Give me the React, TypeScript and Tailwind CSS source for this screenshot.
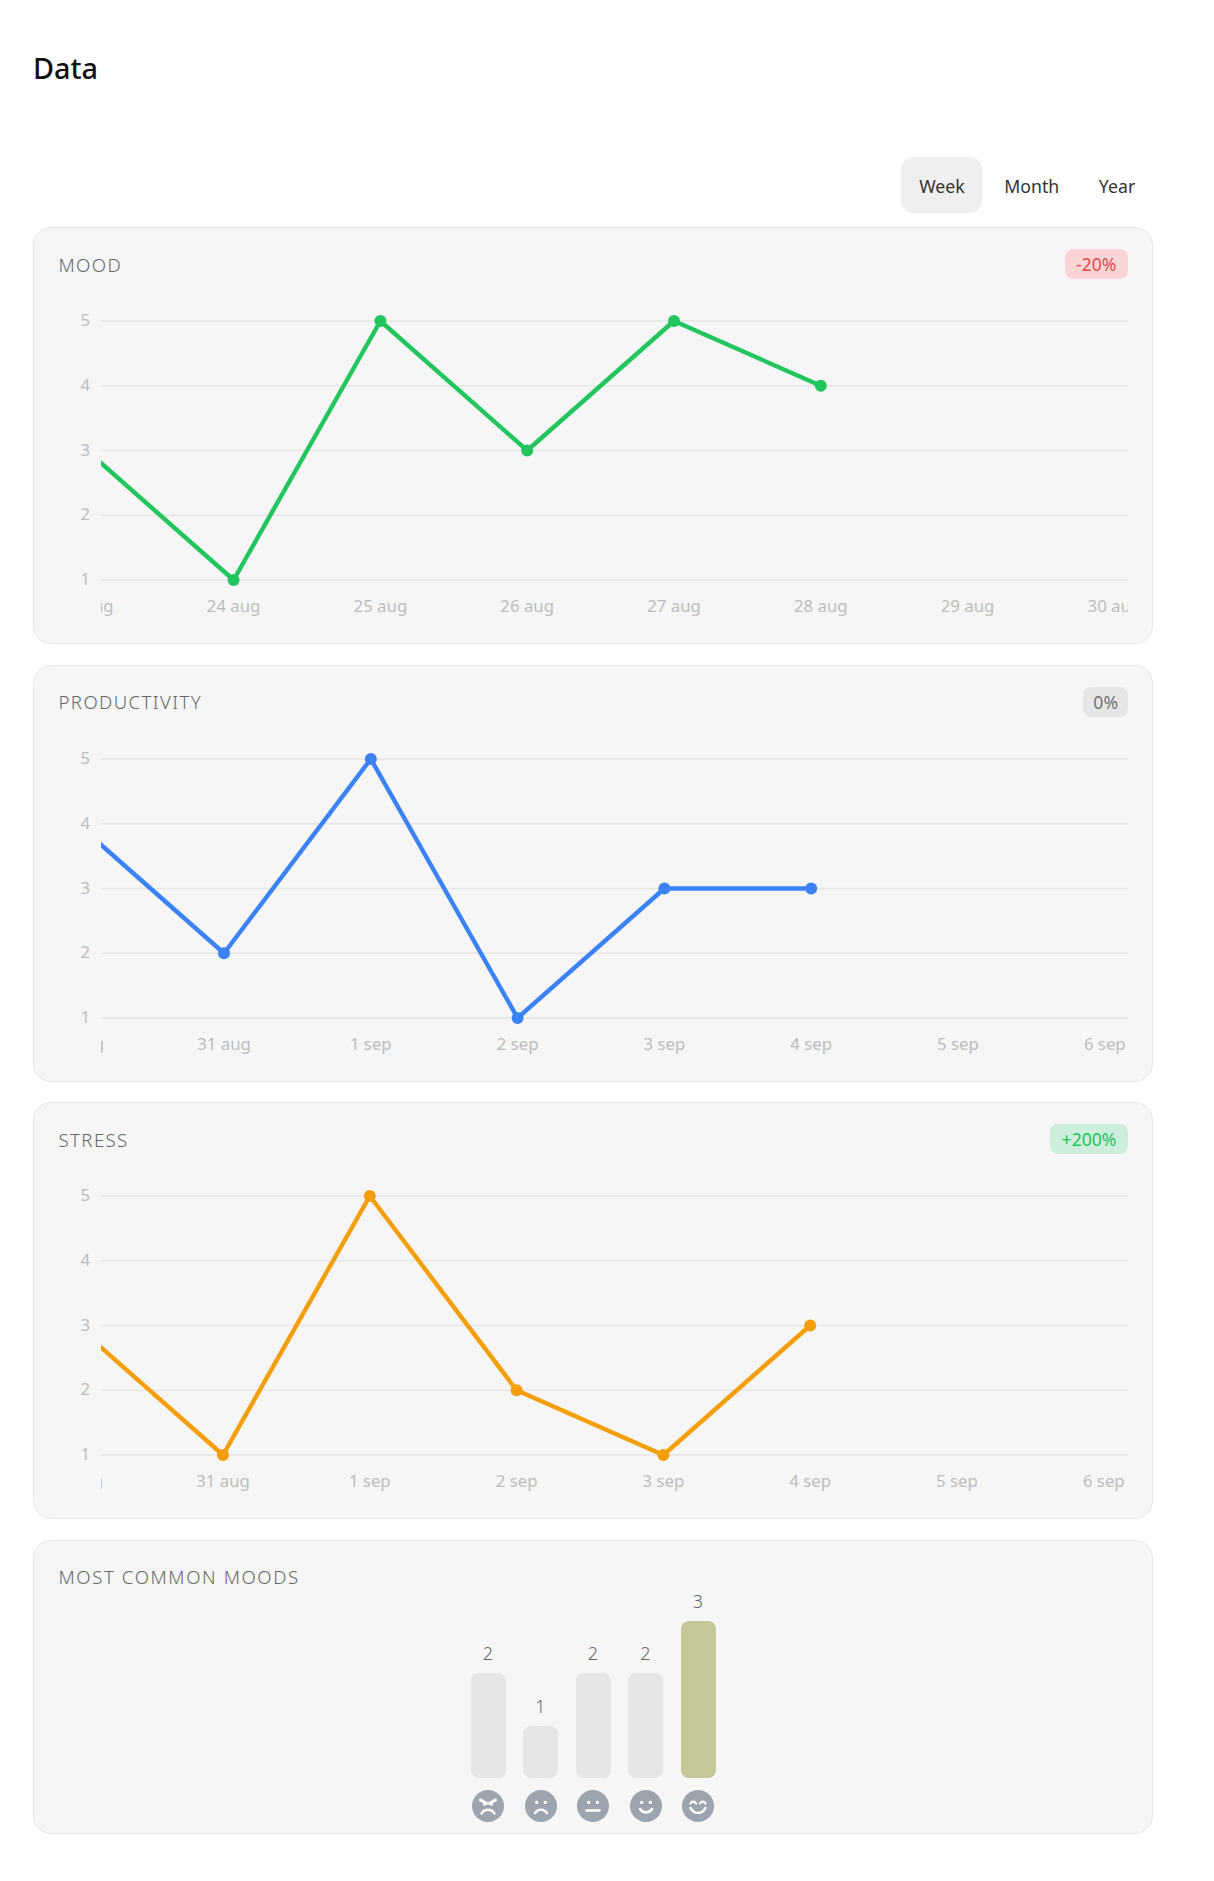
const Y = (v: number) => 21 + (5 - v) * 64.75

const charts = [
  {
    title: 'MOOD', badge: '-20%', badgeC: 'bg-[#f9d5d5] text-[#e5484d]', color: '#22c55e', x0: 28.8,
    labels: ['23 aug', '24 aug', '25 aug', '26 aug', '27 aug', '28 aug', '29 aug', '30 aug'],
    values: [3, 1, 5, 3, 5, 4],
  },
  {
    title: 'PRODUCTIVITY', badge: '0%', badgeC: 'bg-[#e6e6e6] text-[#737373]', color: '#3b82f6', x0: 19.2,
    labels: ['30 aug', '31 aug', '1 sep', '2 sep', '3 sep', '4 sep', '5 sep', '6 sep'],
    values: [4, 2, 5, 1, 3, 3],
  },
  {
    title: 'STRESS', badge: '+200%', badgeC: 'bg-[#cdeeda] text-[#22c55e]', color: '#f59e0b', x0: 18.2,
    labels: ['30 aug', '31 aug', '1 sep', '2 sep', '3 sep', '4 sep', '5 sep', '6 sep'],
    values: [3, 1, 5, 2, 1, 3],
  },
]

const STEP = 146.8

function Chart({ c, id }: { c: (typeof charts)[number]; id: string }) {
  const xs = c.labels.map((_, i) => c.x0 + i * STEP)
  const pts = c.values.map((v, i) => `${xs[i]},${Y(v)}`).join(' ')
  return (
    <svg width="1070" height="320" className="block mt-[21px]">
      <defs>
        <clipPath id={id}>
          <rect x="43" y="0" width="1027" height="320" />
        </clipPath>
      </defs>
      {[5, 4, 3, 2, 1].map(v => (
        <g key={v}>
          <line x1="43" x2="1070" y1={Y(v)} y2={Y(v)} stroke="#e6e6e6" strokeWidth="1.6" />
          <text x="32" y={Y(v) + 5} textAnchor="end" className="fill-[#bdbdbd] text-[16.8px]">{v}</text>
        </g>
      ))}
      <g clipPath={`url(#${id})`}>
        {c.labels.map((l, i) => (
          <text key={l} x={xs[i]} y="312" textAnchor="middle" className="fill-[#bdbdbd] text-[16.8px]">{l}</text>
        ))}
        <polyline points={pts} fill="none" stroke={c.color} strokeWidth="4.4" strokeLinejoin="round" />
        {c.values.slice(1).map((v, i) => (
          <circle key={i} cx={xs[i + 1]} cy={Y(v)} r="6" fill={c.color} />
        ))}
      </g>
    </svg>
  )
}

const faces = [
  <>
    <path d="M8.5 10 14.5 13.4M23.5 10 17.5 13.4" strokeWidth="3" />
    <path d="M12.3 14.6h.01M19.7 14.6h.01" strokeWidth="2.6" />
    <path d="M9.5 23.5c3-5 10-5 13 0" strokeWidth="2.4" />
  </>,
  <>
    <path d="M11.7 12.4h.01M20.3 12.4h.01" strokeWidth="3.4" />
    <path d="M10 23c3-4.5 9-4.5 12 0" strokeWidth="2.4" />
  </>,
  <>
    <path d="M11.7 12.4h.01M20.3 12.4h.01" strokeWidth="3.4" />
    <path d="M9.5 20.5h13" strokeWidth="2.4" />
  </>,
  <>
    <path d="M11.7 12.4h.01M20.3 12.4h.01" strokeWidth="3.4" />
    <path d="M10 19c3 4.5 9 4.5 12 0" strokeWidth="2.4" />
  </>,
  <>
    <path d="M8.5 13.5c1.5-2.5 4-2.5 5.5 0M18 13.5c1.5-2.5 4-2.5 5.5 0" strokeWidth="2.2" />
    <path d="M8.5 18c3.5 6.5 11.5 6.5 15 0" strokeWidth="2.4" />
  </>,
]

const moods = [
  { n: 2, h: 'h-[105px]', bar: 'bg-[#e6e6e6]' },
  { n: 1, h: 'h-[52px]', bar: 'bg-[#e6e6e6]' },
  { n: 2, h: 'h-[105px]', bar: 'bg-[#e6e6e6]' },
  { n: 2, h: 'h-[105px]', bar: 'bg-[#e6e6e6]' },
  { n: 3, h: 'h-[157px]', bar: 'bg-[#c5c797]' },
]

export default function App() {
  return (
    <div className="min-h-[1881px] bg-white pl-[33px] font-['Noto_Sans',sans-serif]">
      <div className="w-[1120px]">
        <h1 className="pt-[48px] h-[157px] text-[28.8px] leading-[40px] font-medium text-[#111]">Data</h1>

        <div className="flex justify-end gap-1 mb-[14px]">
          {['Week', 'Month', 'Year'].map((t, i) => (
            <button key={t} className={`h-[56px] px-[17.8px] pt-[3px] rounded-xl text-[17.7px] text-[#333] ${i === 0 ? 'bg-[#efefef]' : ''}`}>
              {t}
            </button>
          ))}
        </div>

        <div className="flex flex-col gap-[20.6px]">
          {charts.map((c, i) => (
            <div key={c.title} className="h-[417px] rounded-[18px] border border-[#e6e6e6] bg-[#f6f6f6] px-6 pt-[21px]">
              <div className="flex items-center justify-between h-[30px]">
                <span className="pt-[1px] pl-[0.5px] text-[18.6px] font-light tracking-[1.4px] text-[#666]">{c.title}</span>
                <span className={`h-[30px] leading-[30px] ${c.badge === '0%' ? 'px-[10px]' : 'px-[11.5px]'} rounded-lg text-[17.6px] ${c.badgeC}`}>{c.badge}</span>
              </div>
              <Chart c={c} id={`clip-${i}`} />
            </div>
          ))}

          <div className="h-[294px] rounded-[18px] border border-[#e6e6e6] bg-[#f6f6f6] px-6 pt-[21px]">
            <div className="flex items-center h-[30px] pt-[1px] pl-[0.5px] text-[18.6px] font-light tracking-[1.6px] text-[#666]">MOST COMMON MOODS</div>
            <div className="flex items-end justify-center gap-[17.5px] h-[216px] mt-[14px]">
              {moods.map((m, i) => (
                <div key={i} className="flex flex-col items-center w-[35px]">
                  <span className="text-[18px] font-light leading-[24px] mb-[8px] text-[#666]">{m.n}</span>
                  <div className={`w-[35px] rounded-lg ${m.h} ${m.bar}`} />
                  <svg width="32" height="32" viewBox="0 0 32 32" fill="none" stroke="white" strokeLinecap="round" className="mt-3">
                    <circle cx="16" cy="16" r="16" fill="#9ca5af" stroke="none" />
                    {faces[i]}
                  </svg>
                </div>
              ))}
            </div>
          </div>
        </div>
      </div>
    </div>
  )
}
